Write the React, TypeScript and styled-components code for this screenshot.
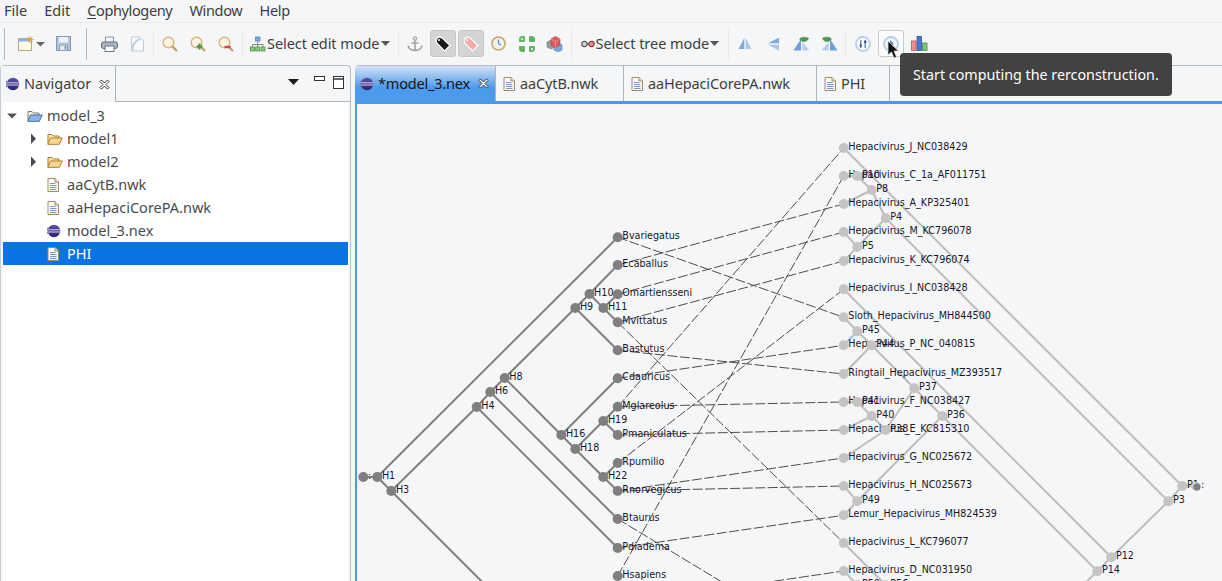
import React from "react"
import styled, { createGlobalStyle } from "styled-components"

const UI_FONT = `"Noto Sans", "Open Sans", sans-serif`

const GlobalStyle = createGlobalStyle`
  html, body { margin: 0; height: 100%; overflow: hidden; background: #f5f6f7; }
  #root { height: 100%; }
`

const Page = styled.div`
  width: 1222px;
  height: 581px;
  position: relative;
  overflow: hidden;
  display: flex;
  flex-direction: column;
  background: #f5f6f7;
  color: #3d3d3d;
  font-family: ${UI_FONT};
  font-size: 14.5px;
`

const MenuBar = styled.div`
  height: 22px;
  display: flex;
  align-items: flex-start;
  gap: 17px;
  padding-left: 4px;
  border-bottom: 1px solid #eceded;
  & u { text-underline-offset: 2px; }
`

const MenuItem = styled.span<{ $track?: number }>`
  line-height: 21px;
  letter-spacing: ${p => p.$track ?? 0}px;
`

const Label = styled.span`
  margin-bottom: 2px;
  white-space: nowrap;
`

const Toolbar = styled.div`
  height: 41px;
  display: flex;
  align-items: center;
  padding-left: 4px;
`

const Grip = styled.div<{ $left: number; $right: number }>`
  width: 1px;
  height: 32px;
  border-left: 1px solid #b4b8bb;
  border-radius: 3px;
  margin: 0 ${p => p.$right}px 0 ${p => p.$left}px;
`

const Sep = styled.div<{ $right?: number }>`
  width: 1px;
  height: 30px;
  background: #e9eaeb;
  margin: 0 ${p => p.$right ?? 2}px 0 2px;
`

const ToolBtn = styled.div<{ $state?: "on" | "hover"; $width?: number }>`
  width: ${p => p.$width ?? 28}px;
  height: 28px;
  flex: none;
  display: flex;
  align-items: center;
  justify-content: center;
  & > div {
    width: 26px;
    height: 27px;
    display: flex;
    align-items: center;
    justify-content: center;
    box-sizing: border-box;
    border-radius: 3px;
    background: ${p => (p.$state === "on" ? "#d3d4d5" : p.$state === "hover" ? "#fbfbfc" : "transparent")};
    border: 1px solid ${p => (p.$state === "on" ? "#c6c7c8" : p.$state === "hover" ? "#c9cbcd" : "transparent")};
  }
`

const Combo = styled.div<{ $left: number; $right: number }>`
  display: flex;
  align-items: center;
  flex: none;
  height: 28px;
  padding: 0 ${p => p.$right}px 0 ${p => p.$left}px;
  gap: 1px;
  letter-spacing: -0.05px;
`

const Panels = styled.div`
  flex: 1;
  display: flex;
  gap: 4px;
  min-height: 0;
  padding-top: 1px;
`

const NavPanel = styled.section`
  width: 351px;
  flex: none;
  box-sizing: border-box;
  display: flex;
  flex-direction: column;
  border: 1px solid #b9bdc1;
  border-bottom: none;
  border-radius: 4px 4px 0 0;
  border-left-color: #c9ccd0;
`

const NavHeader = styled.div`
  height: 35px;
  flex: none;
  display: flex;
  align-items: center;
  border-bottom: 1px solid #b0b4b8;
  position: relative;
`

const NavTab = styled.div`
  height: 36px;
  width: 115px;
  box-sizing: border-box;
  display: flex;
  align-items: center;
  padding-left: 5px;
  background: #f5f6f7;
  border-right: 1px solid #b0b4b8;
  margin-bottom: -1px;
  gap: 4px;
  & > svg:last-child { margin-left: 4px; }
`

const ViewButtons = styled.div`
  margin-left: auto;
  display: flex;
  align-items: center;
  padding: 0 6px 3px 0;
  gap: 8px;
  height: 30px;
  & > svg:first-child { margin-right: 7px; }
`

const TreeArea = styled.div`
  flex: 1;
  margin: 0 2px;
  background: #fff;
  padding-top: 2px;
`

const TreeRow = styled.div<{ $depth: number; $selected?: boolean }>`
  height: 23px;
  display: flex;
  align-items: center;
  padding-left: ${p => 4 + p.$depth * 20}px;
  background: ${p => (p.$selected ? "#0a72e4" : "transparent")};
  color: ${p => (p.$selected ? "#fff" : "#4a4a4a")};
`

const Twisty = styled.span`
  width: 20px;
  height: 16px;
  flex: none;
  display: flex;
`

const RowIcon = styled.span`
  width: 20px;
  height: 16px;
  flex: none;
  display: flex;
  align-items: center;
`

const EditorPanel = styled.section`
  flex: 1;
  display: flex;
  flex-direction: column;
  min-width: 0;
`

const TabBar = styled.div`
  height: 35px;
  flex: none;
  display: flex;
  border-top: 1px solid #b9bdc1;
  border-radius: 4px 0 0 0;
`

const EditorTab = styled.div<{ $active?: boolean; $width: number }>`
  width: ${p => p.$width}px;
  box-sizing: border-box;
  flex: none;
  display: flex;
  align-items: center;
  gap: ${p => (p.$active ? 4 : 5)}px;
  padding-left: ${p => (p.$active ? 5 : 7)}px;
  border-right: 1px solid #b0b4b8;
  color: ${p => (p.$active ? "#151515" : "#3d3d3d")};
  background: ${p => (p.$active ? "linear-gradient(#d3e3f6, #4c9aeb 62%)" : "transparent")};
  border-top-left-radius: ${p => (p.$active ? "4px" : "0")};
  letter-spacing: ${p => (p.$active ? "-0.2px" : "-0.12px")};
  & > svg:nth-child(3) { margin-left: 4px; }
`

const BlueRule = styled.div`
  height: 3px;
  flex: none;
  background: #4a98e6;
`

const Canvas = styled.div`
  flex: 1;
  min-height: 0;
  border-left: 2px solid #4a98e6;
  background: #f5f6f8;
  & > svg { display: block; }
`

const Tooltip = styled.div`
  position: absolute;
  left: 900px;
  top: 53px;
  width: 272px;
  height: 43px;
  box-sizing: border-box;
  padding-left: 13px;
  display: flex;
  align-items: center;
  background: #424242;
  border-radius: 4px;
  color: #fff;
  font-size: 14.3px;
`

const Cursor = styled.svg`
  position: absolute;
  left: 887px;
  top: 40px;
`

const LinkLine = styled.line`
  stroke: #4d4d4d;
  stroke-width: 1;
  stroke-dasharray: 10 2.5;
`

const TreeLine = styled.line<{ $light?: boolean }>`
  stroke: ${p => (p.$light ? "#bdbdbd" : "#808080")};
  stroke-width: 2;
`

const NodeDot = styled.circle<{ $light?: boolean }>`
  fill: ${p => (p.$light ? "#c4c4c4" : "#7f7f7f")};
`

const NodeLabel = styled.text`
  font-family: "DejaVu Sans", sans-serif;
  font-size: 9.6px;
  fill: #16162a;
`

/* ---- icons ---- */

const Globe = () => (
  <svg width="14" height="14" viewBox="0 0 14 14" style={{ flex: "none" }}>
    <defs>
      <linearGradient id="gl" x1="0" y1="0" x2="0" y2="1">
        <stop offset="0" stopColor="#5b52a8" />
        <stop offset="1" stopColor="#2a2170" />
      </linearGradient>
    </defs>
    <circle cx="7" cy="7" r="6.2" fill="url(#gl)" />
    <path d="M0.8 5.8h12.4M0.6 8h12.8" stroke="#d9d6f2" strokeWidth="1" />
    <path d="M1 3.6A6 6 0 0 0 1 10.4" stroke="#7b6fd0" fill="none" />
  </svg>
)

const DocIcon = () => (
  <svg width="12" height="14" viewBox="0 0 12 14" style={{ flex: "none" }}>
    <path d="M1 .5h7l3.500 3.500v9.500H1z" fill="#fbfbf6" stroke="#a08a62" />
    <path d="M8 .5v3.500h3.500" fill="#e8e2cf" stroke="#a08a62" />
    <path d="M3 5.500h5.500M3 7.500h6.500M3 9.500h6.500M3 11.500h6.500" stroke="#7b96c4" />
  </svg>
)

const FolderOpen = ({ blue }: { blue?: boolean }) => (
  <svg width="16" height="13" viewBox="0 0 16 13">
    <path d="M1 12V2.500h4l1.500 1.500H12v2" fill={blue ? "#f4f0df" : "#fbe3a8"} stroke={blue ? "#7d7a68" : "#a87a2e"} />
    <path d="M.8 12.300L3.500 6h11.800l-3 6.300z" fill={blue ? "#8fb4e6" : "#fbd88e"} stroke={blue ? "#3f6db0" : "#b07c28"} />
  </svg>
)

const TwistyDown = () => (
  <svg width="20" height="16" viewBox="0 0 20 16">
    <path d="M0 5.500h10l-5 5z" fill="#555" />
  </svg>
)

const TwistyRight = () => (
  <svg width="20" height="16" viewBox="0 0 20 16">
    <path d="M4 2.500l5 5.200-5 5.200z" fill="#4a4a4a" />
  </svg>
)

const Close = () => (
  <svg width="11" height="11" viewBox="0 0 11 11" style={{ flex: "none" }}>
    <path d="M1 2.500L2.500 1 5.500 4 8.500 1 10 2.500 7 5.500 10 8.500 8.500 10 5.500 7 2.500 10 1 8.500 4 5.500z" fill="#fff" stroke="#222" strokeWidth=".9" />
  </svg>
)

const Caret = () => (
  <svg width="9" height="5" viewBox="0 0 9 5" style={{ flex: "none" }}>
    <path d="M0 0h9L4.500 5z" fill="#555" />
  </svg>
)

const NewIcon = () => (
  <svg width="28" height="16" viewBox="0 0 28 16">
    <rect x=".5" y="2.500" width="13" height="12" fill="#fdf9e4" stroke="#b8a878" />
    <rect x=".5" y="2.500" width="13" height="3" fill="#8fb3e0" />
    <path d="M12 0v7M8.500 3.500h7M9.500 1l5 5M14.500 1l-5 5" stroke="#e0a828" strokeWidth="1" />
    <path d="M18 6h9l-4.500 4.500z" fill="#666" />
  </svg>
)

const SaveIcon = () => (
  <svg width="15" height="15" viewBox="0 0 15 15">
    <path d="M.5.5h14v14H.5z" fill="#b3c6dc" stroke="#7f97b5" />
    <rect x="3" y="1" width="9" height="5.500" fill="#eef2f7" />
    <rect x="3.500" y="9" width="8" height="5.500" fill="#e4e9ef" stroke="#8a9db5" />
    <rect x="8.500" y="10" width="1.800" height="3.500" fill="#7f97b5" />
  </svg>
)

const PrintIcon = () => (
  <svg width="17" height="16" viewBox="0 0 17 16">
    <path d="M4.500 6V1h8v5" fill="#f4f6f8" stroke="#8495a8" />
    <rect x=".5" y="6" width="16" height="6.500" rx="2" fill="#a9b4c0" stroke="#5e6b78" />
    <rect x="4" y="10" width="9" height="5.500" fill="#fff" stroke="#6d7a88" />
  </svg>
)

const PageIcon = () => (
  <svg width="16" height="16" viewBox="0 0 16 16">
    <path d="M2.500 1h8l4 4v10h-12z" fill="#f8f9fa" stroke="#c5c9cd" />
    <path d="M4 14C3 8 6 5 11 3" fill="none" stroke="#a9c6e6" strokeWidth="1.400" />
  </svg>
)

const ZoomIcon = ({ mark }: { mark?: "plus" | "minus" }) => (
  <svg width="16" height="16" viewBox="0 0 16 16">
    <circle cx="6.500" cy="6.500" r="5.300" fill="#fbf5e8" stroke="#d8b078" strokeWidth="1.400" />
    <path d="M10.500 10.500l4.500 4.500" stroke="#c09a62" strokeWidth="2.200" />
    {mark === "plus" && <path d="M9.500 7.500v6M6.500 10.500h6" stroke="#3f9a3f" strokeWidth="2" />}
    {mark === "minus" && <path d="M6.500 11h6" stroke="#d8464a" strokeWidth="2.400" />}
  </svg>
)

const HierarchyIcon = () => (
  <svg width="16" height="16" viewBox="0 0 16 16" style={{ flex: "none" }}>
    <rect x="5.500" y="1" width="4.500" height="4" fill="#7fa6dc" stroke="#5a82bc" strokeWidth=".8" />
    <path d="M7.700 5v3M2.500 11V8.500h10.500V11M7.700 8.500V11" stroke="#8a8a8a" fill="none" />
    <rect x=".5" y="11" width="4" height="4" fill="#8ccb7e" stroke="#4f9a42" strokeWidth=".8" />
    <rect x="5.700" y="11" width="4" height="4" fill="#8ccb7e" stroke="#4f9a42" strokeWidth=".8" />
    <rect x="11" y="11" width="4" height="4" fill="#8ccb7e" stroke="#4f9a42" strokeWidth=".8" />
  </svg>
)

const AnchorIcon = () => (
  <svg width="16" height="16" viewBox="0 0 16 16">
    <circle cx="8" cy="2.500" r="1.600" fill="none" stroke="#a4a4a4" strokeWidth="1.300" />
    <path d="M8 4v10.500M4.500 7h7M1 9.500c.5 3 3.500 5 7 5s6.500-2 7-5" fill="none" stroke="#a4a4a4" strokeWidth="1.600" />
  </svg>
)

const TagIcon = ({ pink }: { pink?: boolean }) => (
  <svg width="18" height="18" viewBox="0 0 18 18">
    <path d="M2 4.500L4.500 2 8 2.800 16 10.500 10.500 16 2.800 8z" fill={pink ? "#f7a8a8" : "#1a1a1a"} stroke="#fff" strokeWidth="1.200" />
    <circle cx="5" cy="5" r="1.100" fill="#fff" />
  </svg>
)

const ClockIcon = () => (
  <svg width="15" height="15" viewBox="0 0 15 15">
    <circle cx="7.500" cy="7.500" r="6.500" fill="#eef3f8" stroke="#c9a868" strokeWidth="1.700" />
    <path d="M7.500 3.500v4l2.500 1.800" fill="none" stroke="#5c82b8" strokeWidth="1.200" />
  </svg>
)

const GridIcon = () => (
  <svg width="16" height="16" viewBox="0 0 16 16">
    <g fill="#5fb25a" stroke="#3f9a48" strokeWidth=".6">
      <path d="M.5 2l1.500-1.500h3.500v5H.5z" />
      <path d="M10.500.5H14l1.500 1.500v3.500h-5z" />
      <path d="M.5 10.500h5v5H2L.5 14z" />
      <path d="M10.500 10.500h5V14L14 15.500h-3.500z" />
    </g>
    <g fill="#d4ecd0">
      <rect x="2" y="2" width="2" height="2" />
      <rect x="12" y="12" width="2" height="2" />
    </g>
  </svg>
)

const CubesIcon = () => (
  <svg width="17" height="16" viewBox="0 0 17 16">
    <path d="M1 6l4-2 4 2v5l-4 2-4-2z" fill="#9a9a9a" stroke="#777" strokeWidth=".6" />
    <path d="M8 9l4-2 4 2v5l-4 2-4-2z" fill="#7ea6d8" stroke="#5a82b8" strokeWidth=".6" />
    <path d="M5 3l4.500-2.500L14 3v6l-4.500 2.500L5 9z" fill="#e0595c" stroke="#b83a3e" strokeWidth=".6" />
    <path d="M5 3l4.500 2.500L14 3M9.500 5.500v6" fill="none" stroke="#f2a0a2" strokeWidth=".7" />
  </svg>
)

const LinkIcon = () => (
  <svg width="14" height="8" viewBox="0 0 14 8" style={{ flex: "none" }}>
    <circle cx="3.500" cy="4" r="2.700" fill="#d8d8d8" stroke="#555" strokeWidth="1.200" />
    <path d="M6 4h2.500" stroke="#555" strokeWidth="1.400" />
    <circle cx="10.500" cy="4" r="2.700" fill="#f08a8a" stroke="#904040" strokeWidth="1.200" />
  </svg>
)

const TriangleUp = () => (
  <svg width="14" height="13" viewBox="0 0 14 13">
    <path d="M6.300 1v11H.5z" fill="#7fa8dc" />
    <path d="M7.700 1v11h5.800z" fill="#a9c6ea" />
  </svg>
)

const TriangleLeft = () => (
  <svg width="13" height="14" viewBox="0 0 13 14">
    <path d="M12 .5v5.800H1z" fill="#7fa8dc" />
    <path d="M12 13.500V7.700H1z" fill="#a9c6ea" />
  </svg>
)

const TriangleLeaf = ({ flip }: { flip?: boolean }) => (
  <svg width="17" height="15" viewBox="0 0 17 15" style={flip ? { transform: "scaleX(-1)" } : undefined}>
    <path d="M8 3v11.500H.5z" fill="#6f9ed8" />
    <path d="M9.300 6v8.500h7.200z" fill="#b6cfee" />
    <path d="M6.500 3C8 1 11 .5 15.500 2 15 4.500 12.500 6 10 5.500 8.500 5.200 7.500 4.200 6.500 3z" fill="#4d9a55" stroke="#3a7f45" strokeWidth=".5" />
  </svg>
)

const Sliders = () => (
  <svg width="16" height="16" viewBox="0 0 16 16">
    <circle cx="8" cy="8" r="7" fill="#fff" stroke="#b6cdea" strokeWidth="1.800" />
    <path d="M5.800 4v8M10.200 4v8" stroke="#4a72b0" strokeWidth="1.200" />
    <circle cx="5.800" cy="9.500" r="1.300" fill="#2f5a9c" />
    <circle cx="10.200" cy="6" r="1.300" fill="#2f5a9c" />
  </svg>
)

const StartIcon = () => (
  <svg width="16" height="16" viewBox="0 0 16 16">
    <circle cx="8" cy="8" r="7" fill="#f4f8fd" stroke="#b6cdea" strokeWidth="1.800" />
    <path d="M7 4l3.500 4L7 12z" fill="#3a6cc0" />
  </svg>
)

const BarsIcon = () => (
  <svg width="17" height="15" viewBox="0 0 17 15">
    <rect x=".5" y="5" width="4.500" height="9.500" fill="#ef8f90" stroke="#d44" strokeWidth=".8" />
    <rect x="6" y=".5" width="4.500" height="14" fill="#4a78d0" stroke="#2a55aa" strokeWidth=".8" />
    <rect x="11.500" y="7" width="4.500" height="7.500" fill="#7cc47a" stroke="#3a943a" strokeWidth=".8" />
  </svg>
)

const ViewMenu = () => (
  <svg width="11" height="6" viewBox="0 0 11 6">
    <path d="M0 0h11L5.500 6z" fill="#1a1a1a" />
  </svg>
)

const Minimize = () => (
  <svg width="11" height="5" viewBox="0 0 11 5" style={{ marginBottom: 7 }}>
    <rect x=".5" y=".5" width="10" height="4" fill="#fff" stroke="#333" />
  </svg>
)

const Maximize = () => (
  <svg width="11" height="13" viewBox="0 0 11 13">
    <rect x=".5" y=".5" width="10" height="12" fill="#fff" stroke="#333" />
    <path d="M.5 3h10" stroke="#333" strokeWidth="1.500" />
  </svg>
)

/* ---- tree data, page coordinates ---- */

type Pt = [string, number, number]

const HX = 617.7
const PX = 843.7

const hostLeaves: Pt[] = [
  ["Bvariegatus", HX, 237.3],
  ["Ecaballus", HX, 265],
  ["Omartiensseni", HX, 294.3],
  ["Mvittatus", HX, 322.3],
  ["Bastutus", HX, 350.3],
  ["Cdauricus", HX, 378.3],
  ["Mglareolus", HX, 406.7],
  ["Pmaniculatus", HX, 435],
  ["Rpumilio", HX, 463],
  ["Rnorvegicus", HX, 491],
  ["Btaurus", HX, 519],
  ["Pdiadema", HX, 548],
  ["Hsapiens", HX, 576],
]

const hostInner: Pt[] = [
  [":", 363.3, 477],
  ["H1", 377.3, 477],
  ["H3", 391.3, 491],
  ["H4", 476.7, 407],
  ["H6", 490.3, 392],
  ["H8", 504.7, 378],
  ["H9", 575.3, 308],
  ["H10", 589.5, 294],
  ["H11", 603.3, 308],
  ["H16", 561.3, 435],
  ["H18", 575.3, 449],
  ["H19", 603.3, 421],
  ["H22", 603.3, 477],
]

const paraLeaves: Pt[] = [
  ["Hepacivirus_J_NC038429", PX, 148],
  ["Hepacivirus_C_1a_AF011751", PX, 176],
  ["Hepacivirus_A_KP325401", PX, 204],
  ["Hepacivirus_M_KC796078", PX, 232],
  ["Hepacivirus_K_KC796074", PX, 261],
  ["Hepacivirus_I_NC038428", PX, 289.3],
  ["Sloth_Hepacivirus_MH844500", PX, 317.3],
  ["Hepacivirus_P_NC_040815", PX, 345.3],
  ["Ringtail_Hepacivirus_MZ393517", PX, 374],
  ["Hepacivirus_F_NC038427", PX, 402],
  ["Hepacivirus_E_KC815310", PX, 430],
  ["Hepacivirus_G_NC025672", PX, 458],
  ["Hepacivirus_H_NC025673", PX, 486],
  ["Lemur_Hepacivirus_MH824539", PX, 515.3],
  ["Hepacivirus_L_KC796077", PX, 543],
  ["Hepacivirus_D_NC031950", PX, 571],
]

const paraInner: Pt[] = [
  ["P10", 857.3, 176],
  ["P8", 871.7, 190],
  ["P4", 885.7, 218.3],
  ["P5", 857.3, 247],
  ["P45", 857.3, 331.3],
  ["P44", 871.7, 345.3],
  ["P37", 914.3, 388.3],
  ["P41", 857.3, 402],
  ["P40", 871.7, 416],
  ["P38", 885.7, 430],
  ["P36", 942.3, 416],
  ["P49", 857.3, 501.3],
  ["P50", 857.3, 585],
  ["P56", 885.7, 585],
  ["P1", 1182.3, 486],
  ["P3", 1168.3, 501.3],
  ["P12", 1111.3, 557.3],
  ["P14", 1097.3, 571.3],
]

const pos: Record<string, [number, number]> = {}
for (const [n, x, y] of [...hostLeaves, ...hostInner, ...paraLeaves, ...paraInner]) pos[n] = [x, y]

const short = (k: string) => paraLeaves.find(l => l[0].includes(k))![0]

const hostEdges: [string, string][] = [
  [":", "H1"], ["H1", "Bvariegatus"], ["H1", "H3"], ["H3", "H4"], ["H4", "H6"], ["H4", "Pdiadema"],
  ["H6", "H8"], ["H6", "Btaurus"], ["H8", "H9"], ["H8", "H16"], ["H9", "H10"], ["H9", "Bastutus"],
  ["H10", "Ecaballus"], ["H10", "H11"], ["H11", "Omartiensseni"], ["H11", "Mvittatus"],
  ["H16", "Cdauricus"], ["H16", "H18"], ["H18", "H19"], ["H18", "H22"],
  ["H19", "Mglareolus"], ["H19", "Pmaniculatus"], ["H22", "Rpumilio"], ["H22", "Rnorvegicus"],
]

const paraEdges: [string, string][] = [
  ["P1", short("_J_")], ["P1", "P3"], ["P3", "P4"], ["P4", "P8"], ["P4", "P5"],
  ["P8", "P10"], ["P8", short("_A_")], ["P10", short("_C_")],
  ["P5", short("_M_")], ["P5", short("_K_")],
  ["P3", "P12"], ["P12", short("_I_")], ["P12", "P14"],
  ["P14", "P36"], ["P36", "P37"], ["P37", "P44"], ["P44", "P45"], ["P45", short("Sloth")],
  ["P45", short("_P_")], ["P44", short("Ringtail")],
  ["P37", "P38"], ["P38", short("_G_")], ["P38", "P40"], ["P40", "P41"], ["P40", short("_E_")], ["P41", short("_F_")],
  ["P36", "P49"], ["P49", short("_H_")], ["P49", short("Lemur")],
  ["P50", short("_D_")], ["P56", short("_L_")],
]

const links: [string, string][] = [
  ["Bvariegatus", short("Sloth")], ["Ecaballus", short("_A_")], ["Omartiensseni", short("_M_")],
  ["Mvittatus", short("_K_")], ["Mvittatus", short("_L_")], ["Bastutus", short("Ringtail")],
  ["Cdauricus", short("_P_")], ["Mglareolus", short("_F_")], ["Mglareolus", short("_J_")],
  ["Pmaniculatus", short("_E_")], ["Rpumilio", short("_I_")], ["Rnorvegicus", short("_G_")],
  ["Rnorvegicus", short("_H_")], ["Pdiadema", short("Lemur")], ["Hsapiens", short("_C_")],
]

const Cophylogeny = () => (
  <svg width="865" height="477" viewBox="357 104 865 477">
    {hostEdges.map(([a, b]) => (
      <TreeLine key={a + b} x1={pos[a][0]} y1={pos[a][1]} x2={pos[b][0]} y2={pos[b][1]} />
    ))}
    <TreeLine x1={391.3} y1={491} x2={490.3} y2={590} />
    {paraEdges.map(([a, b]) => (
      <TreeLine $light key={a + b} x1={pos[a][0]} y1={pos[a][1]} x2={pos[b][0]} y2={pos[b][1]} />
    ))}
    <TreeLine $light x1={1182.3} y1={486} x2={1196.7} y2={486.7} />
    <TreeLine $light x1={1097.3} y1={571.3} x2={1080} y2={588} />
    {links.map(([a, b]) => (
      <LinkLine key={a + b} x1={pos[a][0]} y1={pos[a][1]} x2={pos[b][0]} y2={pos[b][1]} />
    ))}
    <LinkLine x1={HX} y1={519} x2={760} y2={605} />
    <LinkLine x1={700} y1={592} x2={PX} y2={571} />
    {[...hostLeaves, ...hostInner].map(([n, x, y]) => (
      <g key={n}>
        <NodeDot cx={x} cy={y} r={5} />
        <NodeLabel x={x + 4.6} y={y + 2}>{n}</NodeLabel>
      </g>
    ))}
    {[...paraLeaves, ...paraInner].map(([n, x, y]) => (
      <g key={n}>
        <NodeDot $light cx={x} cy={y} r={5} />
        <NodeLabel x={x + 4.6} y={y + 2}>{n}</NodeLabel>
      </g>
    ))}
    <NodeDot $light cx={1196} cy={486.3} r={4.5} />
    <NodeDot cx={1197} cy={487} r={3.5} />
    <NodeLabel x={1201} y={488}>:</NodeLabel>
  </svg>
)

const files = [
  { name: "model1", depth: 1, icon: <FolderOpen />, twisty: <TwistyRight /> },
  { name: "model2", depth: 1, icon: <FolderOpen />, twisty: <TwistyRight /> },
  { name: "aaCytB.nwk", depth: 1, icon: <DocIcon /> },
  { name: "aaHepaciCorePA.nwk", depth: 1, icon: <DocIcon /> },
  { name: "model_3.nex", depth: 1, icon: <Globe /> },
  { name: "PHI", depth: 1, icon: <DocIcon />, selected: true },
]

export default function App() {
  return (
    <Page>
      <GlobalStyle />
      <MenuBar>
        <MenuItem>File</MenuItem>
        <MenuItem>Edit</MenuItem>
        <MenuItem $track={-0.36}><u>C</u>ophylogeny</MenuItem>
        <MenuItem $track={-0.33}>Window</MenuItem>
        <MenuItem $track={-0.25}>Help</MenuItem>
      </MenuBar>
      <Toolbar>
        <Grip $left={0} $right={9} />
        <ToolBtn $width={34}><NewIcon /></ToolBtn>
        <ToolBtn><div><SaveIcon /></div></ToolBtn>
        <Grip $left={9} $right={7} />
        <ToolBtn><div><PrintIcon /></div></ToolBtn>
        <ToolBtn><div><PageIcon /></div></ToolBtn>
        <Sep />
        <ToolBtn><div><ZoomIcon /></div></ToolBtn>
        <ToolBtn><div><ZoomIcon mark="plus" /></div></ToolBtn>
        <ToolBtn><div><ZoomIcon mark="minus" /></div></ToolBtn>
        <Sep />
        <Combo $left={5} $right={6}><HierarchyIcon /><Label>Select edit mode</Label><Caret /></Combo>
        <Sep />
        <ToolBtn><div><AnchorIcon /></div></ToolBtn>
        <ToolBtn $state="on"><div><TagIcon /></div></ToolBtn>
        <ToolBtn $state="on"><div><TagIcon pink /></div></ToolBtn>
        <ToolBtn><div><ClockIcon /></div></ToolBtn>
        <ToolBtn><div><GridIcon /></div></ToolBtn>
        <ToolBtn><div><CubesIcon /></div></ToolBtn>
        <Sep />
        <Combo $left={7} $right={7}><LinkIcon /><Label>Select tree mode</Label><Caret /></Combo>
        <Sep />
        <ToolBtn><div><TriangleUp /></div></ToolBtn>
        <ToolBtn><div><TriangleLeft /></div></ToolBtn>
        <ToolBtn><div><TriangleLeaf /></div></ToolBtn>
        <ToolBtn><div><TriangleLeaf flip /></div></ToolBtn>
        <Sep $right={3} />
        <ToolBtn><div><Sliders /></div></ToolBtn>
        <ToolBtn $state="hover"><div><StartIcon /></div></ToolBtn>
        <ToolBtn><div><BarsIcon /></div></ToolBtn>
      </Toolbar>
      <Panels>
        <NavPanel>
          <NavHeader>
            <NavTab><Globe /><Label>Navigator</Label><Close /></NavTab>
            <ViewButtons>
              <ViewMenu />
              <Minimize />
              <Maximize />
            </ViewButtons>
          </NavHeader>
          <TreeArea>
            <TreeRow $depth={0}>
              <Twisty><TwistyDown /></Twisty>
              <RowIcon><FolderOpen blue /></RowIcon>
              <Label>model_3</Label>
            </TreeRow>
            {files.map(f => (
              <TreeRow key={f.name} $depth={f.depth} $selected={f.selected}>
                <Twisty>{f.twisty}</Twisty>
                <RowIcon>{f.icon}</RowIcon>
                <Label>{f.name}</Label>
              </TreeRow>
            ))}
          </TreeArea>
        </NavPanel>
        <EditorPanel>
          <TabBar>
            <EditorTab $active $width={141}><Globe /><Label>*model_3.nex</Label><Close /></EditorTab>
            <EditorTab $width={128}><DocIcon /><Label>aaCytB.nwk</Label></EditorTab>
            <EditorTab $width={193}><DocIcon /><Label>aaHepaciCorePA.nwk</Label></EditorTab>
            <EditorTab $width={73}><DocIcon /><Label>PHI</Label></EditorTab>
          </TabBar>
          <BlueRule />
          <Canvas><Cophylogeny /></Canvas>
        </EditorPanel>
      </Panels>
      <Tooltip>Start computing the rerconstruction.</Tooltip>
      <Cursor width="12" height="20" viewBox="0 0 12 20">
        <path d="M1 1v14l3.500-3 2.500 6 2.500-1-2.500-6h4.500z" fill="#111" stroke="#ddd" strokeWidth=".8" />
      </Cursor>
    </Page>
  )
}
